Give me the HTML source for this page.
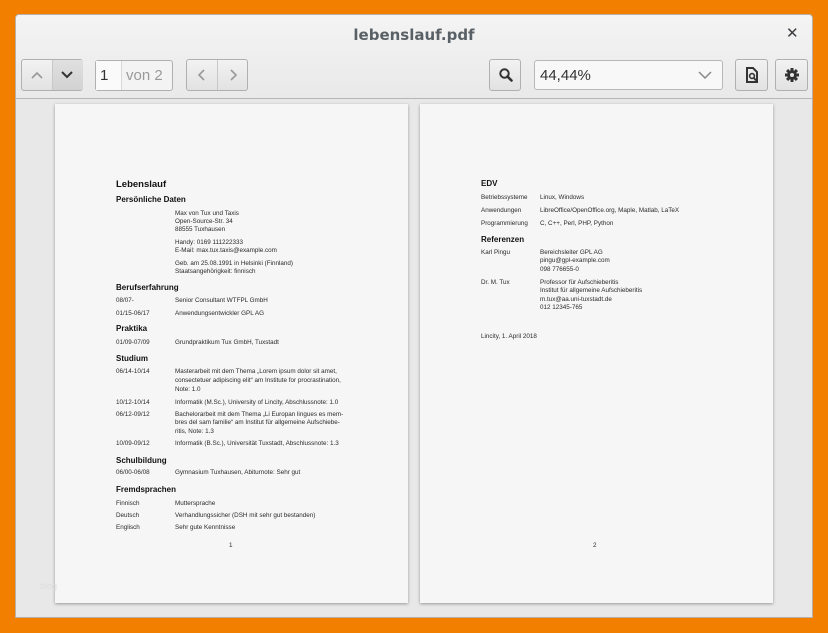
<!DOCTYPE html>
<html><head><meta charset="utf-8"><style>
*{margin:0;padding:0;box-sizing:border-box}
body{width:828px;height:633px;background:#f27f00;position:relative;overflow:hidden;font-family:"Liberation Sans","DejaVu Sans",sans-serif}
#win{position:absolute;left:15px;top:14px;width:798px;height:604px;background:#e8e8e8;border:1px solid #b8b0a8;border-radius:4px 4px 0 0;overflow:hidden}
#hdr{position:absolute;left:0;top:0;width:796px;height:84px;background:linear-gradient(#f4f4f4,#e9e9e9);border-bottom:1px solid #b6b6b6}
.title{position:absolute;left:0;width:796px;top:11px;text-align:center;font-size:15px;font-weight:bold;color:#5a6166;font-family:"DejaVu Sans",sans-serif}
.close{position:absolute;left:770px;top:9px;font-size:15px;font-weight:bold;color:#3a3f44}
.btn{position:absolute;border:1px solid #b0b0b0;border-radius:3px;background:linear-gradient(#f2f2f2,#e2e2e2);height:32px}
.sep{position:absolute;top:0;width:1px;height:100%;background:#c8c8c8}
.pg{position:absolute;background:#f6f6f6;box-shadow:0 1px 3px rgba(0,0,0,.35)}
.t{position:absolute;font-size:6.3px;color:#2a2a2a;white-space:nowrap;line-height:8px;margin-top:1px}
.h{position:absolute;font-size:8px;font-weight:bold;color:#111;white-space:nowrap;margin-top:1px}
</style></head><body>
<div id="win">
<div id="hdr">
<div class="title">lebenslauf.pdf</div>
<div class="close">✕</div>
<div class="btn" style="left:5px;top:44px;width:62px">
 <div style="position:absolute;left:31px;top:0;width:30px;height:30px;background:linear-gradient(#e0e0e0,#d2d2d2)"></div>
 <div class="sep" style="left:30px"></div>
 <svg style="position:absolute;left:8px;top:9px" width="14" height="12"><path d="M2 9 L7 4 L12 9" fill="none" stroke="#999" stroke-width="1.6"/></svg>
 <svg style="position:absolute;left:38px;top:9px" width="14" height="12"><path d="M2 3 L7 8 L12 3" fill="none" stroke="#333" stroke-width="2"/></svg>
</div>
<div class="btn" style="left:79px;top:45px;width:78px;height:31px;background:#f3f3f3">
 <div style="position:absolute;left:0;top:0;width:25px;height:29px;background:#fafafa"></div>
 <div class="sep" style="left:25px;background:#d8d8d8"></div>
 <div style="position:absolute;left:4px;top:6px;font-size:15px;color:#333">1</div>
 <div style="position:absolute;left:30px;top:6px;font-size:15px;color:#999">von 2</div>
</div>
<div class="btn" style="left:170px;top:44px;width:62px">
 <div class="sep" style="left:30px"></div>
 <svg style="position:absolute;left:9px;top:8px" width="12" height="14"><path d="M8 2 L3 7 L8 12" fill="none" stroke="#999" stroke-width="1.6"/></svg>
 <svg style="position:absolute;left:40px;top:8px" width="12" height="14"><path d="M4 2 L9 7 L4 12" fill="none" stroke="#999" stroke-width="1.6"/></svg>
</div>
<div class="btn" style="left:473px;top:44px;width:32px">
 <svg style="position:absolute;left:8px;top:7px" width="16" height="16"><circle cx="6.5" cy="6.5" r="4.2" fill="none" stroke="#333" stroke-width="2"/><path d="M9.5 9.5 L13.5 13.5" stroke="#333" stroke-width="2.6" stroke-linecap="round"/></svg>
</div>
<div style="position:absolute;left:518px;top:45px;width:189px;height:30px;border:1px solid #b8b8b8;border-radius:3px;background:#f8f8f8">
 <div style="position:absolute;left:5px;top:6px;font-size:15px;color:#333">44,44%</div>
 <svg style="position:absolute;left:162px;top:9px" width="16" height="10"><path d="M2 2 L8 8 L14 2" fill="none" stroke="#888" stroke-width="1.5"/></svg>
</div>
<div class="btn" style="left:719px;top:44px;width:33px">
 <svg style="position:absolute;left:9px;top:7px" width="14" height="17"><path d="M2 1 H8 L12 5 V15 H2 Z" fill="none" stroke="#333" stroke-width="2"/><circle cx="7" cy="9" r="2.4" fill="none" stroke="#333" stroke-width="1.6"/><path d="M8.5 10.5 L11 13.5" stroke="#333" stroke-width="1.8"/></svg>
</div>
<div class="btn" style="left:759px;top:44px;width:33px">
 <svg style="position:absolute;left:8px;top:7px" width="16" height="16" viewBox="0 0 16 16"><g fill="#333"><circle cx="8" cy="8" r="4.8"/><rect x="6.5" y="1" width="3" height="14"/><rect x="1" y="6.5" width="14" height="3"/><rect x="6.5" y="1" width="3" height="14" transform="rotate(45 8 8)"/><rect x="6.5" y="1" width="3" height="14" transform="rotate(-45 8 8)"/></g><circle cx="8" cy="8" r="2" fill="#e8e8e8"/></svg>
</div>
</div>
</div>

<div class="pg" style="left:55px;top:104px;width:353px;height:499px"></div>
<div class="pg" style="left:420px;top:104px;width:353px;height:499px"></div>
<div style="position:absolute;left:40px;top:581px;font-size:9px;color:#ddd">blog</div>

<div class="h" style="left:116px;top:178px;font-size:9.5px">Lebenslauf</div>
<div class="h" style="left:116px;top:194px">Persönliche Daten</div>
<div class="t" style="left:175px;top:209px">Max von Tux und Taxis</div>
<div class="t" style="left:175px;top:217px">Open-Source-Str. 34</div>
<div class="t" style="left:175px;top:225px">88555 Tuxhausen</div>
<div class="t" style="left:175px;top:238px">Handy: 0169 111222333</div>
<div class="t" style="left:175px;top:246px">E-Mail: max.tux.taxis@example.com</div>
<div class="t" style="left:175px;top:259px">Geb. am 25.08.1991 in Helsinki (Finnland)</div>
<div class="t" style="left:175px;top:267px">Staatsangehörigkeit: finnisch</div>
<div class="h" style="left:116px;top:282px">Berufserfahrung</div>
<div class="t" style="left:116px;top:296px">08/07-</div><div class="t" style="left:175px;top:296px">Senior Consultant WTFPL GmbH</div>
<div class="t" style="left:116px;top:309px">01/15-06/17</div><div class="t" style="left:175px;top:309px">Anwendungsentwickler GPL AG</div>
<div class="h" style="left:116px;top:323px">Praktika</div>
<div class="t" style="left:116px;top:338px">01/09-07/09</div><div class="t" style="left:175px;top:338px">Grundpraktikum Tux GmbH, Tuxstadt</div>
<div class="h" style="left:116px;top:353px">Studium</div>
<div class="t" style="left:116px;top:367px">06/14-10/14</div><div class="t" style="left:175px;top:367px">Masterarbeit mit dem Thema „Lorem ipsum dolor sit amet,</div>
<div class="t" style="left:175px;top:376px">consectetuer adipiscing elit“ am Institute for procrastination,</div>
<div class="t" style="left:175px;top:385px">Note: 1.0</div>
<div class="t" style="left:116px;top:398px">10/12-10/14</div><div class="t" style="left:175px;top:398px">Informatik (M.Sc.), University of Lincity, Abschlussnote: 1.0</div>
<div class="t" style="left:116px;top:410px">06/12-09/12</div><div class="t" style="left:175px;top:410px">Bachelorarbeit mit dem Thema „Li Europan lingues es mem-</div>
<div class="t" style="left:175px;top:418px">bres del sam familie“ am Institut für allgemeine Aufschiebe-</div>
<div class="t" style="left:175px;top:427px">ritis, Note: 1.3</div>
<div class="t" style="left:116px;top:439px">10/09-09/12</div><div class="t" style="left:175px;top:439px">Informatik (B.Sc.), Universität Tuxstadt, Abschlussnote: 1.3</div>
<div class="h" style="left:116px;top:455px">Schulbildung</div>
<div class="t" style="left:116px;top:468px">06/00-06/08</div><div class="t" style="left:175px;top:468px">Gymnasium Tuxhausen, Abiturnote: Sehr gut</div>
<div class="h" style="left:116px;top:484px">Fremdsprachen</div>
<div class="t" style="left:116px;top:499px">Finnisch</div><div class="t" style="left:175px;top:499px">Muttersprache</div>
<div class="t" style="left:116px;top:511px">Deutsch</div><div class="t" style="left:175px;top:511px">Verhandlungssicher (DSH mit sehr gut bestanden)</div>
<div class="t" style="left:116px;top:523px">Englisch</div><div class="t" style="left:175px;top:523px">Sehr gute Kenntnisse</div>
<div class="t" style="left:229px;top:541px">1</div>

<div class="h" style="left:481px;top:178px">EDV</div>
<div class="t" style="left:481px;top:193px">Betriebssysteme</div><div class="t" style="left:540px;top:193px">Linux, Windows</div>
<div class="t" style="left:481px;top:206px">Anwendungen</div><div class="t" style="left:540px;top:206px">LibreOffice/OpenOffice.org, Maple, Matlab, LaTeX</div>
<div class="t" style="left:481px;top:219px">Programmierung</div><div class="t" style="left:540px;top:219px">C, C++, Perl, PHP, Python</div>
<div class="h" style="left:481px;top:234px">Referenzen</div>
<div class="t" style="left:481px;top:248px">Karl Pingu</div><div class="t" style="left:540px;top:248px">Bereichsleiter GPL AG</div>
<div class="t" style="left:540px;top:256px">pingu@gpl-example.com</div>
<div class="t" style="left:540px;top:265px">098 776655-0</div>
<div class="t" style="left:481px;top:278px">Dr. M. Tux</div><div class="t" style="left:540px;top:278px">Professor für Aufschieberitis</div>
<div class="t" style="left:540px;top:286px">Institut für allgemeine Aufschieberitis</div>
<div class="t" style="left:540px;top:295px">m.tux@aa.uni-tuxstadt.de</div>
<div class="t" style="left:540px;top:303px">012 12345-765</div>
<div class="t" style="left:481px;top:332px">Lincity, 1. April 2018</div>
<div class="t" style="left:593px;top:541px">2</div>
</body></html>
